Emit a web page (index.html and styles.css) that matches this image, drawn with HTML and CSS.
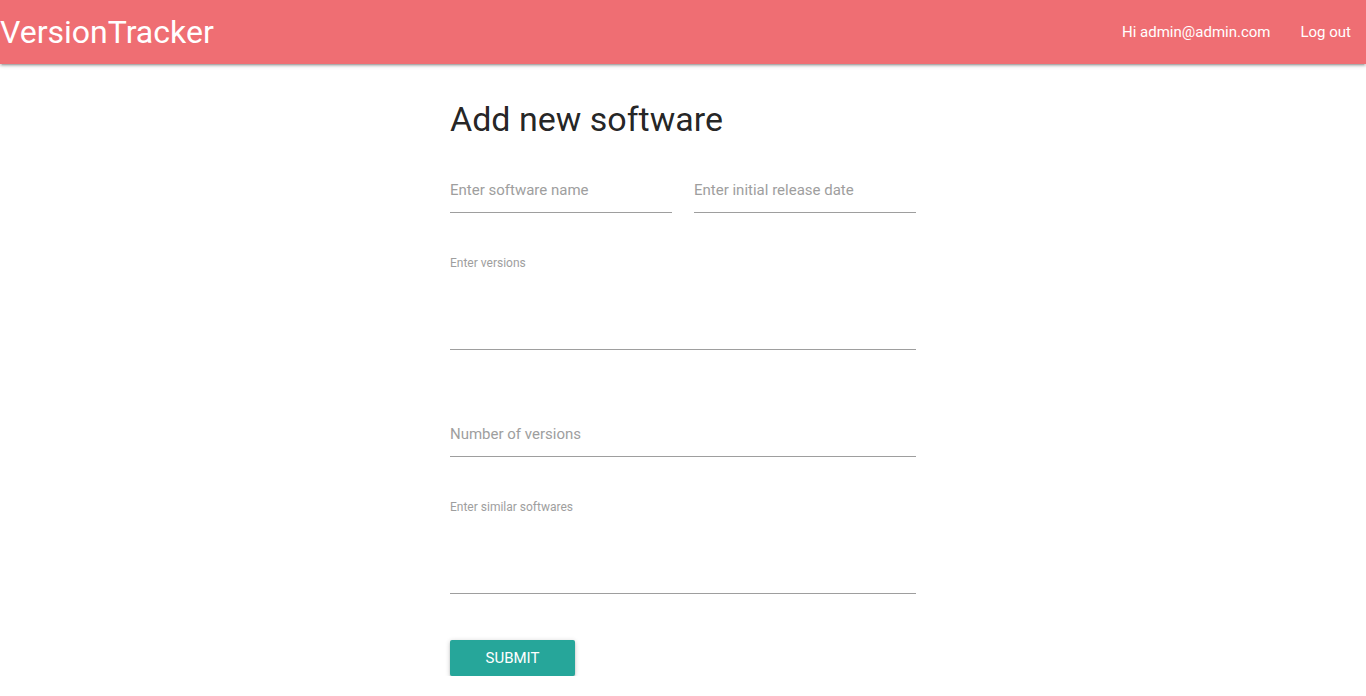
FILE: index.html
```html
<!DOCTYPE html>
<html lang="en">
<head>
<meta charset="utf-8">
<title>VersionTracker</title>
<link rel="stylesheet" href="styles.css">
</head>
<body>
<nav class="navbar">
  <a class="brand" href="#">VersionTracker</a>
  <ul class="nav-links">
    <li><a href="#">Hi admin@admin.com</a></li>
    <li><a href="#">Log out</a></li>
  </ul>
</nav>
<main class="content">
  <h4 class="title">Add new software</h4>
  <form class="form">
    <div class="row-two">
      <input class="text-input" type="text" placeholder="Enter software name">
      <input class="text-input" type="text" placeholder="Enter initial release date">
    </div>
    <div class="area-field versions">
      <label class="area-label">Enter versions</label>
      <textarea class="text-area"></textarea>
    </div>
    <div class="single-field">
      <input class="text-input" type="text" placeholder="Number of versions">
    </div>
    <div class="area-field similar">
      <label class="area-label">Enter similar softwares</label>
      <textarea class="text-area"></textarea>
    </div>
    <button class="submit" type="button">Submit</button>
  </form>
</main>
</body>
</html>
```

FILE: styles.css
```css
* { box-sizing: border-box; }
html, body {
  margin: 0;
  padding: 0;
  background: #fff;
  font-family: Roboto, "Liberation Sans", sans-serif;
  color: rgba(0,0,0,0.87);
}
.navbar {
  height: 64px;
  background: #ef6e73;
  display: flex;
  align-items: center;
  justify-content: space-between;
  box-shadow: 0 2px 2px 0 rgba(0,0,0,0.14), 0 3px 1px -2px rgba(0,0,0,0.12), 0 1px 5px 0 rgba(0,0,0,0.2);
  position: relative;
}
.brand {
  color: #fff;
  text-decoration: none;
  font-size: 32px;
  line-height: 64px;
  padding-left: 0;
}
.nav-links {
  list-style: none;
  margin: 0;
  padding: 0;
  display: flex;
}
.nav-links a {
  display: block;
  padding: 0 15px;
  color: #fff;
  text-decoration: none;
  font-size: 15px;
  line-height: 64px;
}
.content {
  width: 466px;
  margin: 0 auto;
}
.title {
  font-size: 34px;
  font-weight: 400;
  line-height: 110%;
  margin: 37px 0 0 0;
}
.form {
  display: flex;
  flex-direction: column;
  margin-top: 26px;
}
.row-two {
  display: grid;
  grid-template-columns: 1fr 1fr;
  column-gap: 22px;
}
.text-input {
  display: block;
  width: 100%;
  height: 49px;
  border: none;
  border-bottom: 1px solid #9e9e9e;
  outline: none;
  padding: 4px 0 0 0;
  font-family: inherit;
  font-size: 15px;
  color: rgba(0,0,0,0.87);
  background: transparent;
}
.text-input::placeholder {
  color: #9e9e9e;
  opacity: 1;
}
.area-field {
  display: flex;
  flex-direction: column;
}
.versions { margin-top: 43px; }
.similar { margin-top: 43px; }
.area-label {
  font-size: 12px;
  line-height: 14px;
  color: #9e9e9e;
}
.text-area {
  display: block;
  width: 100%;
  height: 80px;
  border: none;
  border-bottom: 1px solid #9e9e9e;
  outline: none;
  resize: none;
  padding: 0;
  font-family: inherit;
  font-size: 16px;
  background: transparent;
}
.single-field { margin-top: 58px; }
.submit {
  align-self: flex-start;
  margin-top: 46px;
  width: 125px;
  height: 36px;
  border: none;
  border-radius: 2px;
  background: #26a69a;
  color: #fff;
  font-family: inherit;
  font-size: 15px;
  text-transform: uppercase;
  letter-spacing: 0;
  box-shadow: 0 2px 2px 0 rgba(0,0,0,0.14), 0 3px 1px -2px rgba(0,0,0,0.12), 0 1px 5px 0 rgba(0,0,0,0.2);
  cursor: pointer;
}
```
